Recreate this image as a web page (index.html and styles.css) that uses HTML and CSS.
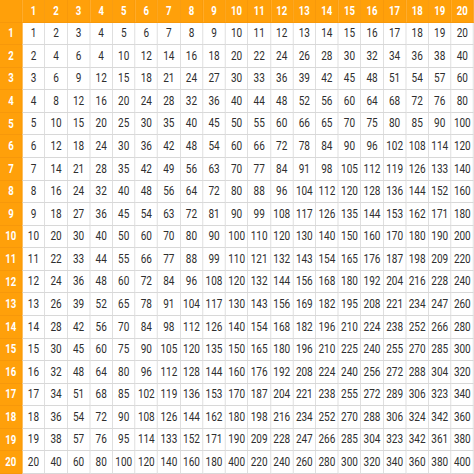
FILE: index.html
```html
<!DOCTYPE html>
<html>
<head>
<meta charset="utf-8">
<link rel="stylesheet" href="styles.css">
</head>
<body>
<div class="frame">
<div class="grid">
<span class="h"></span><span class="h">1</span><span class="h">2</span><span class="h">3</span><span class="h">4</span><span class="h">5</span><span class="h">6</span><span class="h">7</span><span class="h">8</span><span class="h">9</span><span class="h">10</span><span class="h">11</span><span class="h">12</span><span class="h">13</span><span class="h">14</span><span class="h">15</span><span class="h">16</span><span class="h">17</span><span class="h">18</span><span class="h">19</span><span class="h">20</span>
<span class="h">1</span><span>1</span><span>2</span><span>3</span><span>4</span><span>5</span><span>6</span><span>7</span><span>8</span><span>9</span><span>10</span><span>11</span><span>12</span><span>13</span><span>14</span><span>15</span><span>16</span><span>17</span><span>18</span><span>19</span><span>20</span>
<span class="h">2</span><span>2</span><span>4</span><span>6</span><span>4</span><span>10</span><span>12</span><span>14</span><span>16</span><span>18</span><span>20</span><span>22</span><span>24</span><span>26</span><span>28</span><span>30</span><span>32</span><span>34</span><span>36</span><span>38</span><span>40</span>
<span class="h">3</span><span>3</span><span>6</span><span>9</span><span>12</span><span>15</span><span>18</span><span>21</span><span>24</span><span>27</span><span>30</span><span>33</span><span>36</span><span>39</span><span>42</span><span>45</span><span>48</span><span>51</span><span>54</span><span>57</span><span>60</span>
<span class="h">4</span><span>4</span><span>8</span><span>12</span><span>16</span><span>20</span><span>24</span><span>28</span><span>32</span><span>36</span><span>40</span><span>44</span><span>48</span><span>52</span><span>56</span><span>60</span><span>64</span><span>68</span><span>72</span><span>76</span><span>80</span>
<span class="h">5</span><span>5</span><span>10</span><span>15</span><span>20</span><span>25</span><span>30</span><span>35</span><span>40</span><span>45</span><span>50</span><span>55</span><span>60</span><span>66</span><span>65</span><span>70</span><span>75</span><span>80</span><span>85</span><span>90</span><span>100</span>
<span class="h">6</span><span>6</span><span>12</span><span>18</span><span>24</span><span>30</span><span>36</span><span>42</span><span>48</span><span>54</span><span>60</span><span>66</span><span>72</span><span>78</span><span>84</span><span>90</span><span>96</span><span>102</span><span>108</span><span>114</span><span>120</span>
<span class="h">7</span><span>7</span><span>14</span><span>21</span><span>28</span><span>35</span><span>42</span><span>49</span><span>56</span><span>63</span><span>70</span><span>77</span><span>84</span><span>91</span><span>98</span><span>105</span><span>112</span><span>119</span><span>126</span><span>133</span><span>140</span>
<span class="h">8</span><span>8</span><span>16</span><span>24</span><span>32</span><span>40</span><span>48</span><span>56</span><span>64</span><span>72</span><span>80</span><span>88</span><span>96</span><span>104</span><span>112</span><span>120</span><span>128</span><span>136</span><span>144</span><span>152</span><span>160</span>
<span class="h">9</span><span>9</span><span>18</span><span>27</span><span>36</span><span>45</span><span>54</span><span>63</span><span>72</span><span>81</span><span>90</span><span>99</span><span>108</span><span>117</span><span>126</span><span>135</span><span>144</span><span>153</span><span>162</span><span>171</span><span>180</span>
<span class="h">10</span><span>10</span><span>20</span><span>30</span><span>40</span><span>50</span><span>60</span><span>70</span><span>80</span><span>90</span><span>100</span><span>110</span><span>120</span><span>130</span><span>140</span><span>150</span><span>160</span><span>170</span><span>180</span><span>190</span><span>200</span>
<span class="h">11</span><span>11</span><span>22</span><span>33</span><span>44</span><span>55</span><span>66</span><span>77</span><span>88</span><span>99</span><span>110</span><span>121</span><span>132</span><span>143</span><span>154</span><span>165</span><span>176</span><span>187</span><span>198</span><span>209</span><span>220</span>
<span class="h">12</span><span>12</span><span>24</span><span>36</span><span>48</span><span>60</span><span>72</span><span>84</span><span>96</span><span>108</span><span>120</span><span>132</span><span>144</span><span>156</span><span>168</span><span>180</span><span>192</span><span>204</span><span>216</span><span>228</span><span>240</span>
<span class="h">13</span><span>13</span><span>26</span><span>39</span><span>52</span><span>65</span><span>78</span><span>91</span><span>104</span><span>117</span><span>130</span><span>143</span><span>156</span><span>169</span><span>182</span><span>195</span><span>208</span><span>221</span><span>234</span><span>247</span><span>260</span>
<span class="h">14</span><span>14</span><span>28</span><span>42</span><span>56</span><span>70</span><span>84</span><span>98</span><span>112</span><span>126</span><span>140</span><span>154</span><span>168</span><span>182</span><span>196</span><span>210</span><span>224</span><span>238</span><span>252</span><span>266</span><span>280</span>
<span class="h">15</span><span>15</span><span>30</span><span>45</span><span>60</span><span>75</span><span>90</span><span>105</span><span>120</span><span>135</span><span>150</span><span>165</span><span>180</span><span>196</span><span>210</span><span>225</span><span>240</span><span>255</span><span>270</span><span>285</span><span>300</span>
<span class="h">16</span><span>16</span><span>32</span><span>48</span><span>64</span><span>80</span><span>96</span><span>112</span><span>128</span><span>144</span><span>160</span><span>176</span><span>192</span><span>208</span><span>224</span><span>240</span><span>256</span><span>272</span><span>288</span><span>304</span><span>320</span>
<span class="h">17</span><span>17</span><span>34</span><span>51</span><span>68</span><span>85</span><span>102</span><span>119</span><span>136</span><span>153</span><span>170</span><span>187</span><span>204</span><span>221</span><span>238</span><span>255</span><span>272</span><span>289</span><span>306</span><span>323</span><span>340</span>
<span class="h">18</span><span>18</span><span>36</span><span>54</span><span>72</span><span>90</span><span>108</span><span>126</span><span>144</span><span>162</span><span>180</span><span>198</span><span>216</span><span>234</span><span>252</span><span>270</span><span>288</span><span>306</span><span>324</span><span>342</span><span>360</span>
<span class="h">19</span><span>19</span><span>38</span><span>57</span><span>76</span><span>95</span><span>114</span><span>133</span><span>152</span><span>171</span><span>190</span><span>209</span><span>228</span><span>247</span><span>266</span><span>285</span><span>304</span><span>323</span><span>342</span><span>361</span><span>380</span>
<span class="h">20</span><span>20</span><span>40</span><span>60</span><span>80</span><span>100</span><span>120</span><span>140</span><span>160</span><span>180</span><span>400</span><span>220</span><span>240</span><span>260</span><span>280</span><span>300</span><span>320</span><span>340</span><span>360</span><span>380</span><span>400</span>
</div>
</div>
</body>
</html>
```
FILE: styles.css
```css
html, body {
  margin: 0;
  padding: 0;
  background: #ffffff;
  overflow: hidden;
  width: 474px;
  height: 474px;
}
.frame {
  width: 474px;
  height: 474px;
  overflow: hidden;
}
.grid {
  /* laid out 1.25x wider, then squeezed horizontally to give condensed digits */
  width: 592.5px;
  height: 474px;
  transform: scaleX(0.8);
  transform-origin: 0 0;
  display: grid;
  grid-template-columns: repeat(21, 1fr);
  grid-template-rows: repeat(21, 1fr);
  font-family: Roboto, "Liberation Sans", sans-serif;
  background: #ffffff;
}
.grid span {
  display: flex;
  align-items: center;
  justify-content: center;
  box-sizing: border-box;
  border-right: 1.25px solid #d8d8d8;
  border-bottom: 1px solid #d8d8d8;
  color: #2e2e2e;
  font-size: 12.5px;
  line-height: 1;
  white-space: nowrap;
}
.grid span.h {
  background: #ffa00a;
  color: #ffffff;
  font-weight: bold;
  font-size: 12px;
  border-right-color: #f7980a;
  border-bottom-color: #f7980a;
}
```
